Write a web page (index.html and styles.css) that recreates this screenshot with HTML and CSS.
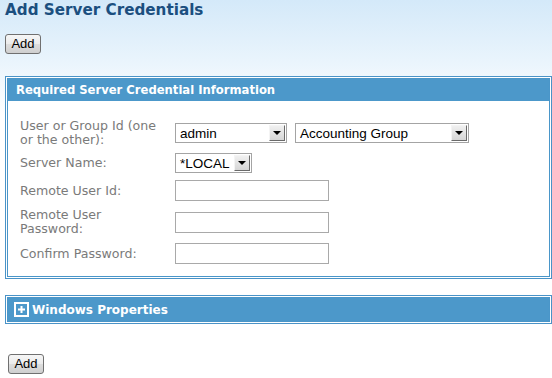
FILE: index.html
```html
<!DOCTYPE html>
<html>
<head>
<meta charset="utf-8">
<link rel="stylesheet" href="styles.css">
</head>
<body>
<div class="page">
  <h1 class="title">Add Server Credentials</h1>
  <div class="actions"><button class="btn" type="button">Add</button></div>

  <section class="panel">
    <div class="panel-inner">
      <div class="panel-head">Required Server Credential Information</div>
      <div class="panel-body">
        <div class="row">
          <div class="label">User or Group Id (one<br>or the other):</div>
          <div class="controls">
            <div class="select w-user"><span class="value">admin</span><span class="arrow"></span></div>
            <div class="select w-group"><span class="value">Accounting Group</span><span class="arrow"></span></div>
          </div>
        </div>
        <div class="row">
          <div class="label">Server Name:</div>
          <div class="controls">
            <div class="select w-server"><span class="value">*LOCAL</span><span class="arrow"></span></div>
          </div>
        </div>
        <div class="row">
          <div class="label">Remote User Id:</div>
          <div class="controls"><input class="text" type="text"></div>
        </div>
        <div class="row">
          <div class="label">Remote User<br>Password:</div>
          <div class="controls"><input class="text" type="password"></div>
        </div>
        <div class="row">
          <div class="label">Confirm Password:</div>
          <div class="controls"><input class="text" type="password"></div>
        </div>
      </div>
    </div>
  </section>

  <section class="panel panel-collapsed">
    <div class="panel-inner">
      <div class="panel-head head-toggle">
        <svg class="plus" width="15" height="15" viewBox="0 0 15 15">
          <rect x="1" y="1" width="13" height="13" fill="none" stroke="#ffffff" stroke-width="2"/>
          <rect x="4" y="6.5" width="7" height="2" fill="#ffffff"/>
          <rect x="6.5" y="4" width="2" height="7" fill="#ffffff"/>
        </svg>
        <span>Windows Properties</span>
      </div>
    </div>
  </section>

  <div class="actions bottom"><button class="btn" type="button">Add</button></div>
</div>
</body>
</html>
```

FILE: styles.css
```css
html, body {
  margin: 0;
  padding: 0;
}
body {
  background: #ffffff linear-gradient(to bottom, #d4e9f9 0px, #e9f4fc 60px, #ffffff 115px) no-repeat;
  background-size: 100% 115px;
  min-height: 378px;
  font-family: "DejaVu Sans", Verdana, sans-serif;
}
.page {
  padding: 1px 0 0 5px;
}
.title {
  margin: 0;
  font-size: 15.2px;
  line-height: 18px;
  font-weight: bold;
  color: #1b4f7f;
}
.actions {
  margin-top: 14px;
  height: 20px;
}
.actions.bottom {
  margin-top: 29px;
  padding-left: 3px;
}
.btn {
  width: 36px;
  height: 20px;
  margin: 0;
  padding: 0;
  border: 1px solid #707070;
  border-radius: 3px;
  background: linear-gradient(to bottom, #f6f6f6 0%, #ebebeb 50%, #dddddd 51%, #cfcfcf 100%);
  font-family: "Liberation Sans", Arial, sans-serif;
  font-size: 13px;
  color: #000;
  line-height: 17px;
}
.panel {
  width: 543px;
  margin-top: 23px;
  border: 1px solid #4a93c7;
  padding: 1px;
  background: #fff;
}
.panel-collapsed {
  margin-top: 16px;
}
.panel-inner {
  border: 1px solid #4a96c9;
}
.panel-head {
  height: 22px;
  background: #4c98ca;
  color: #ffffff;
  font-weight: bold;
  font-size: 11.6px;
  line-height: 22px;
  padding-left: 8px;
}
.head-toggle {
  height: 23px;
  display: flex;
  align-items: center;
  gap: 3px;
  padding-left: 6px;
  font-size: 12px;
}
.plus {
  display: block;
}
.panel-body {
  padding: 15px 12px 8px 12px;
}
.row {
  display: flex;
  align-items: center;
  padding: 3px 0;
}
.label {
  width: 155px;
  flex: none;
  color: #7a7a7a;
  font-size: 12.6px;
  line-height: 14px;
}
.controls {
  display: flex;
  align-items: center;
  gap: 8px;
}
.select {
  box-sizing: border-box;
  height: 20px;
  border: 1px solid #a4a4a4;
  background: #fff;
  display: flex;
  align-items: center;
  justify-content: space-between;
  font-family: "Liberation Sans", Arial, sans-serif;
  font-size: 13.5px;
  color: #000;
  padding: 0 1px 0 4px;
}
.w-user { width: 112px; }
.w-group { width: 174px; }
.w-server { width: 77px; }
.arrow {
  box-sizing: border-box;
  width: 16px;
  height: 16px;
  border-top: 1px solid #f4f4f4;
  border-left: 1px solid #f4f4f4;
  border-right: 1px solid #6a6a6a;
  border-bottom: 1px solid #6a6a6a;
  background: linear-gradient(to bottom, #f0f0f0, #d6d6d6);
  position: relative;
}
.arrow::after {
  content: "";
  position: absolute;
  left: 3px;
  top: 5px;
  border-left: 4px solid transparent;
  border-right: 4px solid transparent;
  border-top: 4px solid #000;
}
.text {
  box-sizing: border-box;
  width: 154px;
  height: 21px;
  margin: 1px 0;
  border: 1px solid #a9a9a9;
  padding: 0 3px;
  font-family: "Liberation Sans", Arial, sans-serif;
  font-size: 13px;
  background: #fff;
  outline: none;
}
```
